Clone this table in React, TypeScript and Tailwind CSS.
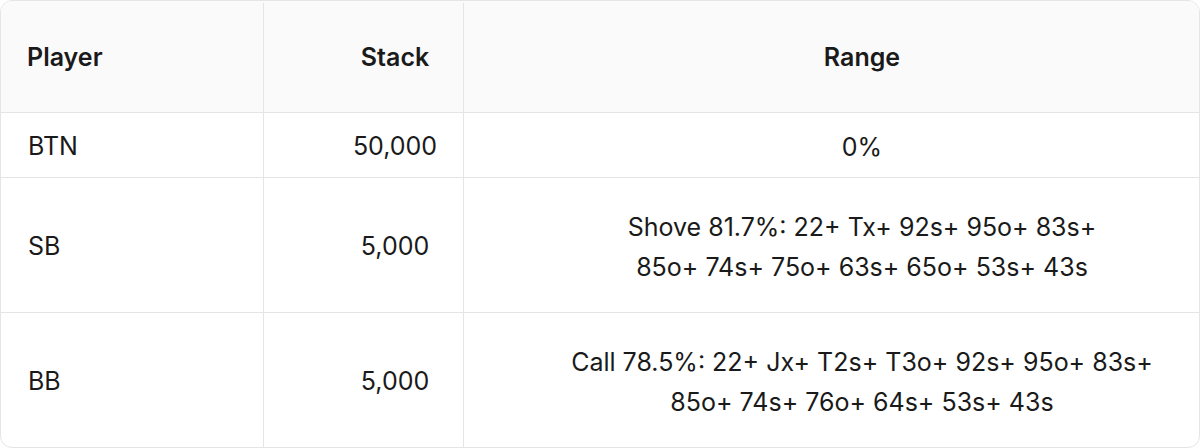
import React from "react";

const cellBase = "border-[#e5e5e5] flex items-center";

export default function App() {
  const rows = [
    { p: "BTN", s: "50,000", r: ["0%"] },
    {
      p: "SB",
      s: "5,000",
      r: ["Shove 81.7%: 22+ Tx+ 92s+ 95o+ 83s+", "85o+ 74s+ 75o+ 63s+ 65o+ 53s+ 43s"],
    },
    {
      p: "BB",
      s: "5,000",
      r: ["Call 78.5%: 22+ Jx+ T2s+ T3o+ 92s+ 95o+ 83s+", "85o+ 74s+ 76o+ 64s+ 53s+ 43s"],
    },
  ];
  const heights = ["h-[65px]", "h-[135px]", "h-[134px]"];
  return (
    <div
      className="w-[1200px] h-[448px] bg-white"
      style={{ fontFamily: "Inter, 'Noto Sans', sans-serif" }}
    >
      <div className="w-full h-full border border-[#e5e5e5] rounded-[12px] overflow-hidden text-[25px] text-[#1a1a1a]">
        <div className="grid grid-cols-[263px_200px_1fr] bg-[#fafafa] h-[112px] border-b border-[#e5e5e5] font-semibold pt-[2px]">
          <div className={`${cellBase} border-r pl-[26px]`}>Player</div>
          <div className={`${cellBase} border-r justify-center pl-[63px]`}>Stack</div>
          <div className={`${cellBase} justify-center pl-[61px]`}>Range</div>
        </div>
        {rows.map((row, i) => (
          <div
            key={row.p}
            className={`grid grid-cols-[263px_200px_1fr] ${heights[i]} ${
              i < rows.length - 1 ? "border-b border-[#e5e5e5]" : ""
            }`}
          >
            <div className={`${cellBase} border-r pl-[27px] pt-[4px]`}>{row.p}</div>
            <div className={`${cellBase} border-r justify-center pl-[63px] pt-[4px]`}>{row.s}</div>
            <div className="flex flex-col items-center justify-center leading-[40px] pl-[61px] pt-[4px]">
              {row.r.map((t) => (
                <div key={t} className="whitespace-nowrap">
                  {t}
                </div>
              ))}
            </div>
          </div>
        ))}
      </div>
    </div>
  );
}
